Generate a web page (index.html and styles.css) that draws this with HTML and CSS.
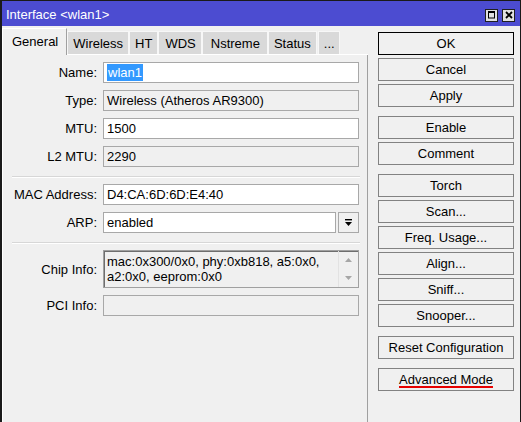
FILE: index.html
```html
<!DOCTYPE html>
<html>
<head>
<meta charset="utf-8">
<title>Interface &lt;wlan1&gt;</title>
<link rel="stylesheet" href="styles.css">
</head>
<body>
<div class="window">
  <div class="titlebar">
    <span class="title">Interface &lt;wlan1&gt;</span>
    <div class="winbtns">
      <span class="winbtn">
        <svg width="11" height="11" viewBox="0 0 11 11"><rect x="2.5" y="1.5" width="6" height="6.5" fill="none" stroke="#000" stroke-width="1"/><line x1="2" y1="2.5" x2="9" y2="2.5" stroke="#000" stroke-width="1"/></svg>
      </span>
      <span class="winbtn">
        <svg width="11" height="11" viewBox="0 0 11 11"><path d="M3 2 L9 8 M9 2 L3 8" stroke="#000" stroke-width="1.8" fill="none"/></svg>
      </span>
    </div>
  </div>
  <div class="content">
    <div class="left">
      <div class="tabs">
        <div class="tab active">General</div>
        <div class="tab">Wireless</div>
        <div class="tab">HT</div>
        <div class="tab wds">WDS</div>
        <div class="tab wide">Nstreme</div>
        <div class="tab">Status</div>
        <div class="tab more">...</div>
      </div>
      <div class="panel">
        <div class="form">
          <div class="label">Name:</div>
          <div class="field edit"><span class="sel">wlan1</span></div>
          <div class="label">Type:</div>
          <div class="field ro">Wireless (Atheros AR9300)</div>
          <div class="label">MTU:</div>
          <div class="field edit">1500</div>
          <div class="label">L2 MTU:</div>
          <div class="field ro">2290</div>
        </div>
        <div class="sep"></div>
        <div class="form">
          <div class="label">MAC Address:</div>
          <div class="field edit">D4:CA:6D:6D:E4:40</div>
          <div class="label">ARP:</div>
          <div class="combo">
            <div class="field edit grow">enabled</div>
            <div class="drop">
              <svg width="7" height="8" viewBox="0 0 7 8"><rect x="0" y="0" width="7" height="1.4" fill="#000"/><polygon points="0,3 7,3 3.5,7" fill="#000"/></svg>
            </div>
          </div>
        </div>
        <div class="sep"></div>
        <div class="form">
          <div class="label">Chip Info:</div>
          <div class="memo">
            <div class="memo-text">mac:0x300/0x0, phy:0xb818, a5:0x0,<br>a2:0x0, eeprom:0x0</div>
            <div class="scroll">
              <div class="arrow"><svg width="7" height="4" viewBox="0 0 7 4"><polygon points="0,4 7,4 3.5,0" fill="#a6a6a6"/></svg></div>
              <div class="arrow"><svg width="7" height="4" viewBox="0 0 7 4"><polygon points="0,0 7,0 3.5,4" fill="#a6a6a6"/></svg></div>
            </div>
          </div>
          <div class="label">PCI Info:</div>
          <div class="field ro"></div>
        </div>
      </div>
    </div>
    <div class="actions">
      <div class="btn default">OK</div>
      <div class="btn">Cancel</div>
      <div class="btn">Apply</div>
      <div class="btn group">Enable</div>
      <div class="btn">Comment</div>
      <div class="btn group">Torch</div>
      <div class="btn">Scan...</div>
      <div class="btn">Freq. Usage...</div>
      <div class="btn">Align...</div>
      <div class="btn">Sniff...</div>
      <div class="btn">Snooper...</div>
      <div class="btn group">Reset Configuration</div>
      <div class="btn group"><span class="mark">Advanced Mode</span></div>
    </div>
  </div>
</div>
</body>
</html>
```

FILE: styles.css
```css
* { box-sizing: border-box; }
html, body { margin: 0; padding: 0; }
body {
  width: 521px;
  height: 422px;
  overflow: hidden;
  background: #f0f0f0;
  font-family: "Liberation Sans", Arial, sans-serif;
  font-size: 13px;
  color: #000;
}
.window {
  width: 521px;
  height: 422px;
  border-top: 1px solid #1a1a1a;
  border-left: 2px solid #1a1a1a;
  border-right: 1px solid #1a1a1a;
  background: #f0f0f0;
  display: flex;
  flex-direction: column;
  overflow: hidden;
}
.titlebar {
  height: 25px;
  flex: none;
  background: #4c4cd1;
  color: #fff;
  display: flex;
  padding: 0 5px 0 4px;
}
.title { line-height: 15px; padding-top: 6px; }
.winbtns { margin-left: auto; display: flex; gap: 4px; padding-top: 8px; }
.winbtn {
  width: 13px;
  height: 13px;
  border: 1px solid #202020;
  background: #e2e2e2;
  display: block;
}
.winbtn svg { display: block; }
.content { flex: 1; display: flex; min-height: 0; }
.left { width: 366px; display: flex; flex-direction: column; }
.tabs {
  height: 29px;
  flex: none;
  display: flex;
  align-items: flex-end;
  border-bottom: 1px solid #fff;
}
.tab {
  height: 23px;
  padding: 4px 5px 0;
  line-height: 15px;
  background: #d9d9d9;
  border: 1px solid #f7f7f7;
  border-bottom: none;
  white-space: nowrap;
}
.tab.wds { padding: 4px 5px 0 6px; }
.tab.wide { padding: 4px 7px 0 8px; }
.tab.more { padding: 4px 4px 0 5px; margin-left: 1px; }
.tab.active {
  height: 27px;
  margin-bottom: -1px;
  padding: 5px 8px 0 9px;
  background: #f0f0f0;
  border-color: #fff #a0a0a0 #fff #fff;
  position: relative;
}
.panel {
  flex: 1;
  border-left: 1px solid #fff;
  border-right: 1px solid #a0a0a0;
  padding-top: 7px;
}
.form {
  display: grid;
  grid-template-columns: 94px 256px;
  column-gap: 6px;
  row-gap: 7px;
}
.label { text-align: right; align-self: center; line-height: 15px; white-space: nowrap; }
.field {
  height: 21px;
  border: 1px solid #a8a8a8;
  line-height: 19px;
  padding-left: 3px;
  white-space: nowrap;
  overflow: hidden;
}
.field.edit { background: #fff; }
.field.ro { background: #f0f0f0; }
.sel { background: #3399ff; color: #fff; padding: 1px 1px; }
.combo { display: flex; gap: 2px; }
.grow { flex: 1; }
.drop {
  width: 21px;
  height: 21px;
  border: 1px solid #a8a8a8;
  background: #f0f0f0;
  display: flex;
  align-items: center;
  justify-content: center;
}
.drop svg { display: block; }
.sep {
  margin: 9px 7px 6px 9px;
  height: 2px;
  border-top: 1px solid #d7d7d7;
  border-bottom: 1px solid #fff;
}
.memo {
  height: 38px;
  border: 1px solid #a0a0a0;
  box-shadow: inset 1px 1px 0 #6e6e6e;
  background: #f0f0f0;
  display: flex;
}
.memo-text { flex: 1; padding: 3px 0 0 3px; line-height: 15px; white-space: nowrap; overflow: hidden; }
.scroll { width: 20px; border-left: 1px solid #e2e2e2; display: flex; flex-direction: column; }
.arrow { height: 18px; display: flex; align-items: center; justify-content: center; }
.arrow svg { display: block; }
.actions {
  width: 136px;
  margin-left: 10px;
  padding-top: 6px;
  display: flex;
  flex-direction: column;
  gap: 3px;
}
.btn {
  height: 23px;
  flex: none;
  border: 1px solid #828282;
  background: #f0f0f0;
  text-align: center;
  line-height: 21px;
  white-space: nowrap;
}
.btn.default { border-color: #000; }
.btn.group { margin-top: 6px; }
.mark {
  text-decoration: underline;
  text-decoration-color: #e60000;
  text-decoration-thickness: 2px;
  text-underline-offset: 2px;
}
```
